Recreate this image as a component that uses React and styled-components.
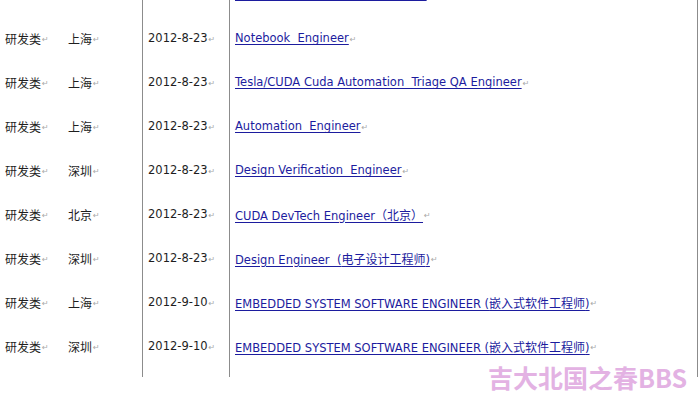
import React from 'react';
import styled, { createGlobalStyle } from 'styled-components';

const GlobalStyle = createGlobalStyle`
  html, body {
    margin: 0;
    padding: 0;
    background: #FFFFFF;
    overflow: hidden;
  }
  body {
    font-family: 'DejaVu Sans', 'Noto Sans CJK SC', sans-serif;
    font-size: 11.5px;
    color: #1e1e1e;
  }
`;

const Page = styled.div`
  position: relative;
  width: 699px;
  height: 400px;
  overflow: hidden;
`;

const Table = styled.div`
  display: flex;
  flex-direction: column;
  margin-top: -28px;
`;

const Row = styled.div`
  display: grid;
  grid-template-columns: 68px 74px 87px 469px;
  height: ${(p) => p.$height || 44}px;
  align-items: stretch;
`;

const Cell = styled.div`
  display: flex;
  align-items: center;
  white-space: nowrap;
  padding-left: ${(p) => (p.$first || p.$divider ? 5 : 0)}px;
  border-left: ${(p) => (p.$divider ? '1px solid #8c8c8c' : 'none')};
  border-right: ${(p) => (p.$last ? '1px solid #8c8c8c' : 'none')};
`;

const Cjk = styled.span`
  font-family: 'Noto Sans CJK SC', sans-serif;
  font-size: 12px;
`;

const Link = styled.a`
  color: ${(p) => (p.$hidden ? 'transparent' : '#1c1c9e')};
  text-decoration: underline;
  text-decoration-color: #1c1c9e;
  text-underline-offset: 2px;
  cursor: pointer;
`;

const Mark = styled.span`
  color: #a8a8a8;
  font-size: 8px;
  margin-left: 1px;
  position: relative;
  top: 1px;
`;

const Watermark = styled.div`
  position: absolute;
  left: 488px;
  top: 362px;
  font-family: 'Noto Sans CJK SC', sans-serif;
  font-weight: bold;
  font-size: 25px;
  line-height: 30px;
  color: #e3b2e3;
`;

const renderText = (text) =>
  text.split(/([\u3000-\u9fff\uff00-\uffef]+)/).map((part, i) =>
    /[\u3000-\u9fff\uff00-\uffef]/.test(part) ? <Cjk key={i}>{part}</Cjk> : part
  );

const jobs = [
  { city: '上海', date: '2012-8-23', title: 'Notebook\u00a0\u00a0Engineer' },
  { city: '上海', date: '2012-8-23', title: 'Tesla/CUDA Cuda Automation\u00a0\u00a0Triage QA Engineer' },
  { city: '上海', date: '2012-8-23', title: 'Automation\u00a0\u00a0Engineer' },
  { city: '深圳', date: '2012-8-23', title: 'Design Verification\u00a0\u00a0Engineer' },
  { city: '北京', date: '2012-8-23', title: 'CUDA DevTech\u00a0Engineer（北京）' },
  { city: '深圳', date: '2012-8-23', title: 'Design Engineer\u00a0\u00a0(电子设计工程师)' },
  { city: '上海', date: '2012-9-10', title: 'EMBEDDED SYSTEM SOFTWARE ENGINEER (嵌入式软件工程师)' },
  { city: '深圳', date: '2012-9-10', title: 'EMBEDDED SYSTEM SOFTWARE ENGINEER (嵌入式软件工程师)' },
];

const App = () => {
  return (
    <Page>
      <GlobalStyle />
      <Table>
        {/* row above the fold: only its link underline shows */}
        <Row>
          <Cell $first />
          <Cell />
          <Cell $divider />
          <Cell $divider $last>
            <Link $hidden>GPU Power Architecture Engineer</Link>
          </Cell>
        </Row>
        {jobs.map((job, i) => (
          <Row key={i}>
            <Cell $first><Cjk>研发类</Cjk><Mark>↵</Mark></Cell>
            <Cell><Cjk>{job.city}</Cjk><Mark>↵</Mark></Cell>
            <Cell $divider>{job.date}<Mark>↵</Mark></Cell>
            <Cell $divider $last>
              <Link>{renderText(job.title)}</Link>
              <Mark>↵</Mark>
            </Cell>
          </Row>
        ))}
        <Row $height={9}>
          <Cell $first />
          <Cell />
          <Cell $divider />
          <Cell $divider $last />
        </Row>
      </Table>
      <Watermark>吉大北国之春BBS</Watermark>
    </Page>
  );
};

export default App;
